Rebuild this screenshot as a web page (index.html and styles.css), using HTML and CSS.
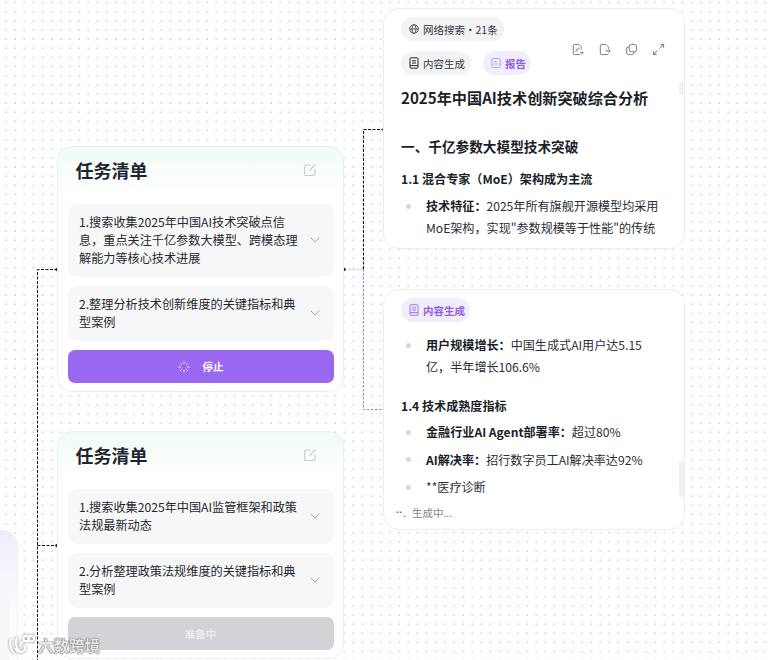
FILE: index.html
```html
<!DOCTYPE html>
<html lang="zh">
<head>
<meta charset="utf-8">
<title>任务清单</title>
<link rel="stylesheet" href="styles.css">
</head>
<body>
<main class="canvas">
  <div class="node side-node"><div class="side-inner"></div></div>

  <svg class="edges" width="768" height="660" viewBox="0 0 768 660" fill="none">
    <path class="edge-black" d="M57.5 269.5H37.5V660"/>
    <path class="edge-black" d="M37.5 545.5H57.5"/>
    <path class="edge-gray" d="M344.5 269.5H363.5"/>
    <path class="edge-black" d="M363.5 269V129.5H383"/>
    <path class="edge-purple" d="M363.5 269V409.5H383"/>
    <circle class="dot-black" cx="57" cy="269.5" r="1.7"/>
    <circle class="dot-black" cx="344" cy="269.5" r="1.7"/>
    <circle class="dot-black" cx="57" cy="545.5" r="1.7"/>
    <circle class="dot-black" cx="383" cy="129.5" r="1"/>
    <circle class="dot-gray" cx="384" cy="409.5" r="1.2"/>
  </svg>

  <section class="node task-card task-one">
    <header class="task-head">
      <h2 class="task-title">任务清单</h2>
      <svg class="edit-icon" viewBox="0 0 14 14" fill="none"><path d="M12 6.5V10.5A2 2 0 0 1 10 12.5H3.500A2 2 0 0 1 1.500 10.500V4A2 2 0 0 1 3.500 2H7.500"/><path d="M6.500 7.500L12.500 1.500"/></svg>
    </header>
    <div class="task-item">
      <p class="task-text">1.搜索收集2025年中国AI技术突破点信息，重点关注千亿参数大模型、跨模态理解能力等核心技术进展</p>
      <svg class="chevron" viewBox="0 0 10 6" fill="none"><path d="M.7 .7L5 5L9.300 .7"/></svg>
    </div>
    <div class="task-item">
      <p class="task-text">2.整理分析技术创新维度的关键指标和典型案例</p>
      <svg class="chevron" viewBox="0 0 10 6" fill="none"><path d="M.7 .7L5 5L9.300 .7"/></svg>
    </div>
    <button class="task-btn btn-stop">
      <svg class="spinner" viewBox="0 0 12 12" fill="none"><path d="M6 .5V3M6 9V11.500M.5 6H3M9 6H11.500M2.100 2.100L3.900 3.900M8.100 8.100L9.900 9.900M2.100 9.900L3.900 8.100M8.100 3.900L9.900 2.100"/></svg>
      <span>停止</span>
    </button>
  </section>

  <section class="node task-card task-two">
    <header class="task-head">
      <h2 class="task-title">任务清单</h2>
      <svg class="edit-icon" viewBox="0 0 14 14" fill="none"><path d="M12 6.5V10.5A2 2 0 0 1 10 12.5H3.500A2 2 0 0 1 1.500 10.500V4A2 2 0 0 1 3.500 2H7.500"/><path d="M6.500 7.500L12.500 1.500"/></svg>
    </header>
    <div class="task-item">
      <p class="task-text">1.搜索收集2025年中国AI监管框架和政策法规最新动态</p>
      <svg class="chevron" viewBox="0 0 10 6" fill="none"><path d="M.7 .7L5 5L9.300 .7"/></svg>
    </div>
    <div class="task-item">
      <p class="task-text">2.分析整理政策法规维度的关键指标和典型案例</p>
      <svg class="chevron" viewBox="0 0 10 6" fill="none"><path d="M.7 .7L5 5L9.300 .7"/></svg>
    </div>
    <button class="task-btn btn-wait"><span>准备中</span></button>
  </section>

  <article class="node doc-card doc-one">
    <div class="tag-row">
      <span class="tag">
        <svg class="tag-icon" viewBox="0 0 12 12" fill="none"><circle cx="6" cy="6" r="4.300"/><ellipse cx="6" cy="6" rx="2" ry="4.300"/><path d="M1.700 6H10.300"/></svg>
        网络搜索・21条
      </span>
    </div>
    <div class="tag-row tag-row-two">
      <span class="tag">
        <svg class="tag-icon dark" viewBox="0 0 12 12" fill="none"><rect x="2" y=".8" width="8" height="10.400" rx="1"/><path d="M4 3.800H8M4 6H8M2 8.600H10"/></svg>
        内容生成
      </span>
      <span class="tag tag-purple">
        <svg class="tag-icon purple-light" viewBox="0 0 12 12" fill="none"><rect x="1.800" y="1.500" width="8.400" height="9" rx="1.500"/><path d="M4 4.500H6.500M4 7H8"/></svg>
        报告
      </span>
      <div class="doc-tools">
        <svg viewBox="0 0 14 14" fill="none"><path d="M8.500 1.500H4A1.500 1.500 0 0 0 2.500 3V11A1.500 1.500 0 0 0 4 12.500H9.500"/><path d="M8.500 1.500L11 4V7"/><path class="tool-purple" d="M5 9.500L5.500 7L8 5L9 6.200L6.800 8.500Z"/><path d="M9.500 10.500H13M11.500 9L13 10.500L11.500 12"/></svg>
        <svg viewBox="0 0 14 14" fill="none"><path d="M8.500 1.500H4A1.500 1.500 0 0 0 2.500 3V11A1.500 1.500 0 0 0 4 12.500H9.500A1.500 1.500 0 0 0 11 11.500"/><path d="M8.500 1.500L11.500 4.500V6"/><path d="M8 8.500H13M11.300 6.800L13 8.500L11.300 10.200"/></svg>
        <svg viewBox="0 0 14 14" fill="none"><rect x="4.500" y="1.500" width="8" height="8" rx="2.500"/><path d="M4.500 4.200H4A2.500 2.500 0 0 0 1.500 6.700V10A2.500 2.500 0 0 0 4 12.500H7.300A2.500 2.500 0 0 0 9.800 10V9.500"/></svg>
        <svg viewBox="0 0 14 14" fill="none"><path d="M8 6L12.500 1.500M9 1.500H12.500V5M6 8L1.500 12.500M5 12.500H1.500V9"/></svg>
      </div>
    </div>
    <h1 class="doc-title">2025年中国AI技术创新突破综合分析</h1>
    <h2 class="doc-h2">一、千亿参数大模型技术突破</h2>
    <h3 class="doc-h3">1.1 混合专家（MoE）架构成为主流</h3>
    <ul class="doc-list">
      <li><b>技术特征：</b>2025年所有旗舰开源模型均采用MoE架构，实现"参数规模等于性能"的传统</li>
    </ul>
    <i class="thumb thumb-one"></i>
  </article>

  <article class="node doc-card doc-two">
    <div class="tag-row">
      <span class="tag tag-purple">
        <svg class="tag-icon purple" viewBox="0 0 12 12" fill="none"><rect x="2" y=".8" width="8" height="10.400" rx="1"/><path d="M4 3.800H8M4 6H8M2 8.600H10"/></svg>
        内容生成
      </span>
    </div>
    <ul class="doc-list list-first">
      <li><b>用户规模增长：</b>中国生成式AI用户达5.15亿，半年增长106.6%</li>
    </ul>
    <h3 class="doc-h3 h3-metrics">1.4 技术成熟度指标</h3>
    <ul class="doc-list list-tight">
      <li><b>金融行业AI Agent部署率：</b>超过80%</li>
      <li><b>AI解决率：</b>招行数字员工AI解决率达92%</li>
      <li>**医疗诊断</li>
    </ul>
    <p class="doc-status"><span class="status-dots">⠒.</span>生成中...</p>
    <i class="thumb thumb-two"></i>
  </article>

  <div class="watermark">
    <svg class="wm-logo" viewBox="0 0 30 24" fill="none"><path d="M3 5C2 12 3 18 7 21M10 3C8 10 9 16 14 20C11 20 9 18 8 15M20 7C15 8 13 11 14 14M18 13C20 16 19 19 14 20"/><circle cx="20" cy="5" r="3"/><circle cx="26" cy="5" r="3"/></svg>
    <span class="wm-text">六数跨境</span>
  </div>
</main>
</body>
</html>
```
FILE: styles.css
```css
* { box-sizing: border-box; }

html, body {
  margin: 0;
  padding: 0;
  height: 100%;
}

body {
  font-family: "Noto Sans CJK SC", "Noto Sans", sans-serif;
  color: #1d2129;
  background: #fff;
  overflow: hidden;
}

.canvas {
  position: relative;
  width: 768px;
  height: 660px;
  overflow: hidden;
  background-color: #fff;
  background-image: radial-gradient(circle at 1px 1px, #c6c6ca .5px, transparent .85px);
  background-size: 9.15px 9.15px;
  background-position: 5px 1.5px;
}

.node { position: absolute; }

.edges {
  position: absolute;
  left: 0;
  top: 0;
  z-index: 1;
}

.edge-black { stroke: #111; stroke-width: 1; stroke-dasharray: 3 1.500; }
.edge-gray { stroke: #c9c9ce; stroke-width: 1; stroke-dasharray: 2.500 1.500; }
.edge-purple { stroke: #9f7fe8; stroke-width: 1; stroke-dasharray: 2.500 1.500; }
.dot-black { fill: #222; }
.dot-gray { fill: #777; }

.side-node {
  left: -60px;
  top: 530px;
  width: 78px;
  height: 170px;
  border-radius: 15px;
  background: linear-gradient(180deg, #efedf9 0%, #fafafd 40%, #fff 100%);
  border: 1px solid #f1f1f4;
}

.side-inner {
  width: 68px;
  height: 80px;
  margin-top: 60px;
  border-radius: 8px;
  background: #f7f7f9;
}

.task-card {
  left: 57px;
  width: 287px;
  padding: 0 9.500px;
  border: 1px solid #eceef1;
  border-radius: 15px;
  background: linear-gradient(180deg, #f1fbf5 0, #fff 46px);
  display: flex;
  flex-direction: column;
  gap: 9.500px;
  z-index: 2;
}

.task-one { top: 146px; height: 246px; }
.task-two { top: 431px; height: 228px; }

.task-head {
  height: 47.500px;
  flex: none;
  padding: 0 17px 2px 8px;
  display: flex;
  align-items: center;
  justify-content: space-between;
}

.task-title {
  margin: 0;
  font-size: 18px;
  font-weight: 700;
  color: #1f2430;
  line-height: 44px;
}

.edit-icon {
  width: 14px;
  height: 14px;
  stroke: #c8cacd;
  stroke-width: 1.100;
}

.task-item {
  display: flex;
  align-items: center;
  justify-content: space-between;
  padding: 9.250px 14px 9.250px 11.500px;
  border-radius: 9px;
  background: #f7f7f8;
}

.task-text {
  margin: 0;
  width: 226px;
  font-size: 12.150px;
  line-height: 18px;
  color: #25282e;
}

.chevron {
  width: 10px;
  height: 6px;
  stroke: #a4a7ad;
  stroke-width: 1;
  flex: none;
}

.task-btn {
  height: 33px;
  flex: none;
  border: 0;
  border-radius: 7px;
  font-family: inherit;
  font-size: 10.500px;
  font-weight: 700;
  color: #fff;
  display: flex;
  align-items: center;
  justify-content: center;
  gap: 13px;
}

.btn-stop { background: #9a68f0; }
.btn-wait { background: #d2d3d7; color: #eceded; }

.spinner {
  width: 12px;
  height: 12px;
  stroke: #ebe2fb;
  stroke-width: 1;
}

.doc-card {
  left: 383px;
  width: 302px;
  height: 241px;
  padding: 8px 17px 0;
  border: 1px solid #ebedf0;
  border-radius: 15px;
  background: #fff;
  overflow: hidden;
  z-index: 2;
}

.doc-one { top: 8px; }
.doc-two { top: 289px; }

.tag-row {
  display: flex;
  align-items: center;
  gap: 12px;
}

.tag-row-two {
  margin-top: 10px;
  position: relative;
}

.tag {
  height: 24px;
  padding: 0 6px 0 7px;
  border-radius: 12px;
  background: #f3f3f4;
  font-size: 10.500px;
  color: #35383f;
  display: inline-flex;
  align-items: center;
  gap: 3px;
}

.tag-purple {
  background: #f2edfd;
  color: #8f62e0;
  font-weight: 700;
  padding-right: 5px;
}

.tag-icon {
  width: 12px;
  height: 12px;
  stroke: #4a4d53;
  stroke-width: .9;
  flex: none;
}

.tag-icon.dark { stroke: #25282e; stroke-width: 1; }
.tag-icon.purple { stroke: #9c74e8; stroke-width: 1; }
.tag-icon.purple-light { stroke: #b79cf0; stroke-width: 1; }

.doc-tools {
  position: absolute;
  right: 2.500px;
  top: -8px;
  display: flex;
  gap: 14px;
}

.doc-tools svg {
  width: 13px;
  height: 13px;
  stroke: #6f7277;
  stroke-width: 1;
}

.doc-tools .tool-purple {
  stroke: #9c74e8;
  fill: #c7b1f2;
  stroke-width: .5;
}

.doc-title {
  margin: 11px 0 0;
  font-size: 15.150px;
  line-height: 22px;
  font-weight: 700;
  color: #1b1f29;
}

.doc-h2 {
  margin: 27px 0 0;
  font-size: 13.650px;
  line-height: 22px;
  font-weight: 700;
  color: #1b1f29;
}

.doc-h3 {
  margin: 11px 0 0;
  font-size: 12.100px;
  line-height: 22px;
  font-weight: 700;
  color: #1b1f29;
}

.doc-list {
  margin: 5px 0 0;
  padding: 0 8.500px 0 25px;
  list-style: none;
  font-size: 12.100px;
  line-height: 22px;
  color: #2a2d33;
}

.doc-list li {
  position: relative;
}

.doc-list li::before {
  content: "";
  position: absolute;
  left: -20px;
  top: 8.500px;
  width: 5px;
  height: 5px;
  border-radius: 50%;
  background: #d8d9dc;
}

.doc-list b {
  font-weight: 700;
  color: #1b1f29;
}

.list-first { margin-top: 12px; }
.h3-metrics { margin-top: 17px; }
.list-tight { margin-top: 4px; }
.list-tight li { margin-bottom: 5.500px; }

.doc-status {
  margin: 2.500px 0 0 -6px;
  font-size: 10.500px;
  line-height: 18px;
  color: #83868c;
}

.status-dots {
  color: #777;
  margin-right: 6px;
}

.thumb {
  position: absolute;
  right: 0;
  width: 5px;
  border-radius: 2px;
  background: #f1f1f3;
}

.thumb-one { top: 73px; height: 13px; }
.thumb-two { top: 171px; height: 36px; }

.watermark {
  position: absolute;
  left: 8px;
  top: 633px;
  display: flex;
  align-items: center;
  gap: 3px;
  z-index: 5;
}

.wm-logo {
  width: 27px;
  height: 22px;
  stroke: #fff;
  stroke-width: 2.500;
  filter: drop-shadow(0 0 1px #777);
}

.wm-text {
  font-size: 15.500px;
  line-height: 24px;
  font-weight: 700;
  color: rgba(255, 255, 255, .85);
  text-shadow: 0 0 1px #666, 0 0 1px #666, 0 0 1px #888;
}
```
